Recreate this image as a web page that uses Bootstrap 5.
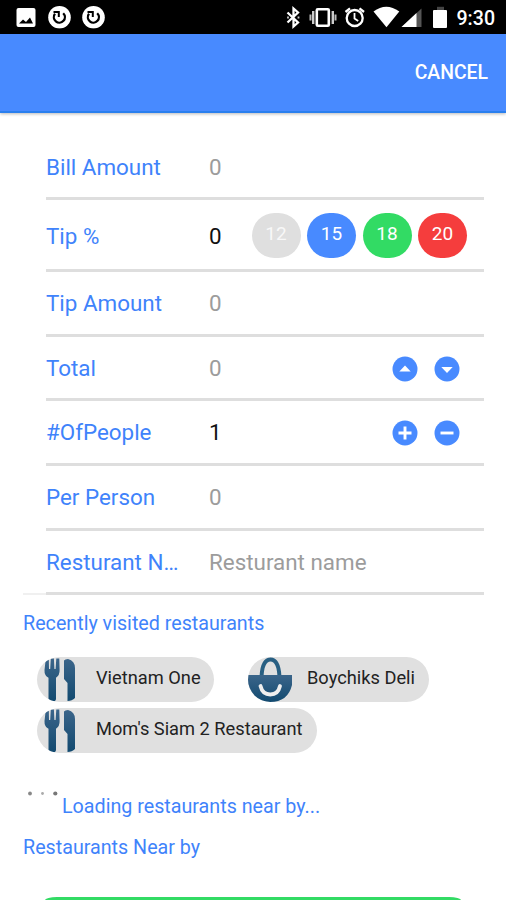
<!DOCTYPE html>
<html lang="en">
<head>
<meta charset="utf-8">
<meta name="viewport" content="width=device-width, initial-scale=1">
<title>Tip calculator</title>
<link href="https://cdn.jsdelivr.net/npm/bootstrap@5.3.0/dist/css/bootstrap.min.css" rel="stylesheet">
<style>
:root { --app-blue: #488aff; --app-line: #dedede; }
body { font-family: Roboto, "Liberation Sans", sans-serif; background: #fff; color: #000; }
.screen { width: 506px; height: 900px; }
svg { display: block; flex: none; }
.status-bar { height: 34px; background: #000; color: #fff; }
.app-bar { height: 79px; background: var(--app-blue); border-bottom: 2px solid #2a7fee; box-shadow: 0 1px 3px rgba(0,0,0,.28); }
.btn-cancel { color: #fff; font-size: 19.4px; font-weight: 500; line-height: 28px; padding: 1px 18px 0 0; border: 0; }
.form-rows { padding: 22px 22px 0 46px; }
.form-line { height: 64.7px; border-bottom: 3px solid var(--app-line); font-size: 22.4px; line-height: 30px; }
.form-line.first { height: 65px; padding-top: 1px; }
.form-line.tall { height: 72px; padding-top: 2px; }
.field-label { width: 163px; color: #3f83fb; white-space: nowrap; flex: none; }
.field-value { color: #9c9c9c; white-space: nowrap; }
.field-value.set { color: #111; }
.tip-pills { gap: 6.5px; margin-right: 17px; }
.tip-pill { width: 49px; height: 45px; border-radius: 24px; color: #fff; font-size: 19px; line-height: 42px; text-align: center; padding: 0 0 3px; border: 0; }
.tip-a { background: #dfdfdf; color: #f8f8f8; } .tip-b { background: var(--app-blue); }
.tip-c { background: #32db64; } .tip-d { background: #f53d3d; }
.steppers { gap: 16px; margin-right: 24px; padding-top: 2px; }
.left-line { width: 23px; height: 2px; background: #f0f0f0; margin: -2px 0 0 23px; }
.section-title { color: #3f83fb; font-size: 19.7px; line-height: 26px; white-space: nowrap; }
.chip-area { padding: 20px 0 0 37px; }
.place-chip { height: 45px; border-radius: 23px; background: #e0e0e0; color: #222; font-size: 18.25px; line-height: 42px; overflow: hidden; white-space: nowrap; }
.place-chip span { margin-left: 15px; }
.done-bar { height: 3px; margin: 0 45px; background: #32db64; border-radius: 12px 12px 0 0 / 3px 3px 0 0; }
</style>
</head>
<body>
<svg width="0" height="0" class="position-absolute" aria-hidden="true">
  <defs>
    <linearGradient id="steel" x1="0" y1="0" x2="0" y2="1"><stop offset="0" stop-color="#3b658a"/><stop offset="1" stop-color="#124a70"/></linearGradient>
    <symbol id="sync" viewBox="0 0 23 23"><circle cx="11.500" cy="11.500" r="11.300" fill="#fff"/><path d="M15.200 7.500a5.500 5.500 0 1 1-8.200.6" fill="none" stroke="#000" stroke-width="2.300"/><path d="M5.500 6.200h5.300v5" fill="none" stroke="#000" stroke-width="2"/></symbol>
    <symbol id="cutlery" viewBox="0 0 44 45">
      <path d="M8.800 1.500 7.500 13q-.3 5.500 4 7.800V42q0 2.500 3.700 2.500T19 42V20.800q3.800-2.500 3.600-7.800L22.300 1.500h-3L18.600 12h-1.200L16.900 1.500h-3.100L13.200 12H12L11.800 1.500Z" fill="url(#steel)"/>
      <path d="M27 3.500Q28 2 31 2q7 2 7 9v30q-3 3-7.500 3V26L27 22Z" fill="url(#steel)"/>
    </symbol>
  </defs>
</svg>
<main class="screen overflow-hidden d-flex flex-column">
  <div class="status-bar d-flex align-items-center flex-shrink-0">
    <svg width="506" height="34" viewBox="0 0 506 34">
      <rect x="16.500" y="8" width="19" height="19" rx="2" fill="#fff"/><path d="m19 23.500 4-4 3 2.500 4-4.500 3 6Z" fill="#000"/>
      <use href="#sync" x="48" y="5.700" width="23" height="23"/>
      <use href="#sync" x="82" y="5.700" width="23" height="23"/>
      <path d="m287.500 12.500 10.500 10-4.500 4V8.500l4.500 4L287.500 22.500" fill="none" stroke="#fff" stroke-width="2.300"/>
      <path d="M288 16.500v2M298.500 16.500v2" stroke="#ccc" stroke-width="1.800"/>
      <rect x="316.800" y="9.200" width="12" height="16.600" rx="1" fill="none" stroke="#fff" stroke-width="2.600"/>
      <path d="M313.200 11v13M332.800 11v13" stroke="#ccc" stroke-width="2.400"/><path d="M310.500 14.500v6M335.500 14.500v6" stroke="#bbb" stroke-width="2"/>
      <circle cx="354.700" cy="18" r="8" fill="none" stroke="#fff" stroke-width="2.300"/><path d="M354.500 13v5.500l3.700 2.500" fill="none" stroke="#fff" stroke-width="1.800"/><path d="m345.500 12 4.500-3.700M364 12l-4.500-3.700" stroke="#fff" stroke-width="2.300"/>
      <path d="M373.500 11.500q12.700-9.500 25.800 0L386.500 27.300Z" fill="#fff"/>
      <path d="M421.500 8.500V27H401.500Z" fill="#555"/><path d="M416.500 13V27H401.500Z" fill="#fff"/>
      <path d="M437 6.800h7v3.200h-7z" fill="#444"/><rect x="433" y="10" width="14" height="18" rx="1" fill="#fff"/>
      <text x="456.500" y="25" fill="#fff" font-family="Roboto, sans-serif" font-weight="500" font-size="19.500" textLength="38.500" lengthAdjust="spacingAndGlyphs">9:30</text>
    </svg>
  </div>
  <header class="app-bar d-flex align-items-center justify-content-end flex-shrink-0">
    <button class="btn btn-cancel">CANCEL</button>
  </header>
  <section class="form-rows flex-shrink-0">
    <div class="form-line first d-flex align-items-center"><span class="field-label">Bill Amount</span><span class="field-value">0</span></div>
    <div class="form-line tall d-flex align-items-center">
      <span class="field-label">Tip %</span><span class="field-value set">0</span>
      <div class="tip-pills d-flex ms-auto">
        <button class="tip-pill tip-a">12</button><button class="tip-pill tip-b">15</button><button class="tip-pill tip-c">18</button><button class="tip-pill tip-d">20</button>
      </div>
    </div>
    <div class="form-line d-flex align-items-center"><span class="field-label">Tip Amount</span><span class="field-value">0</span></div>
    <div class="form-line d-flex align-items-center"><span class="field-label">Total</span><span class="field-value">0</span>
      <div class="steppers d-flex ms-auto">
        <svg width="26" height="26" viewBox="0 0 26 26"><circle cx="13" cy="13" r="12.500" fill="#488aff"/><path d="m7.300 15.500 5.700-6 5.700 6Z" fill="#fff"/></svg>
        <svg width="26" height="26" viewBox="0 0 26 26"><circle cx="13" cy="13" r="12.500" fill="#488aff"/><path d="m7.300 11 5.700 6 5.700-6Z" fill="#fff"/></svg>
      </div>
    </div>
    <div class="form-line d-flex align-items-center"><span class="field-label">#OfPeople</span><span class="field-value set">1</span>
      <div class="steppers d-flex ms-auto">
        <svg width="26" height="26" viewBox="0 0 26 26"><circle cx="13" cy="13" r="12.500" fill="#488aff"/><path d="M6.500 13h13M13 6.500v13" stroke="#fff" stroke-width="2.900"/></svg>
        <svg width="26" height="26" viewBox="0 0 26 26"><circle cx="13" cy="13" r="12.500" fill="#488aff"/><path d="M6.500 13h13" stroke="#fff" stroke-width="2.900"/></svg>
      </div>
    </div>
    <div class="form-line d-flex align-items-center"><span class="field-label">Per Person</span><span class="field-value">0</span></div>
    <div class="form-line d-flex align-items-center"><span class="field-label">Resturant N…</span><span class="field-value">Resturant name</span></div>
  </section>
  <div class="left-line flex-shrink-0"></div>
  <section class="flex-shrink-0">
    <h2 class="section-title fw-normal mb-0" style="padding:16px 0 0 23px">Recently visited restaurants</h2>
    <div class="chip-area">
      <div class="d-flex" style="gap:34px">
        <div class="place-chip d-flex" style="width:177px"><svg width="44" height="45"><use href="#cutlery"/></svg><span>Vietnam One</span></div>
        <div class="place-chip d-flex" style="width:181px">
          <svg width="44" height="45" viewBox="0 0 44 45"><path d="M13.500 20C14 9 17 2.500 22.500 2.500s8.500 6.500 9 17.500" fill="none" stroke="#285f82" stroke-width="4"/><path d="M0 18h44v10q-4 17-22 17T0 28Z" fill="url(#steel)"/><path d="M12.500 29q2 8.500 9.800 8.500T32 29" fill="none" stroke="#eee" stroke-width="3.800" stroke-linecap="round"/></svg>
          <span>Boychiks Deli</span></div>
      </div>
      <div class="place-chip d-flex" style="width:280px;margin-top:6px"><svg width="44" height="45"><use href="#cutlery"/></svg><span>Mom's Siam 2 Restaurant</span></div>
    </div>
    <div class="d-flex" style="padding:38px 0 0 27px">
      <svg width="35" height="8" viewBox="0 0 35 8"><circle cx="3" cy="2.500" r="1.900" fill="#888"/><circle cx="15.500" cy="2.500" r="1.400" fill="#aaa"/><circle cx="28.300" cy="2.500" r="2.100" fill="#777"/></svg>
      <p class="section-title mb-0" style="padding-top:3px">Loading restaurants near by...</p>
    </div>
    <h2 class="section-title fw-normal mb-0" style="padding:15px 0 0 23px">Restaurants Near by</h2>
  </section>
  <div class="done-bar mt-auto flex-shrink-0"></div>
</main>
<script src="https://cdn.jsdelivr.net/npm/bootstrap@5.3.0/dist/js/bootstrap.bundle.min.js"></script>
</body>
</html>
